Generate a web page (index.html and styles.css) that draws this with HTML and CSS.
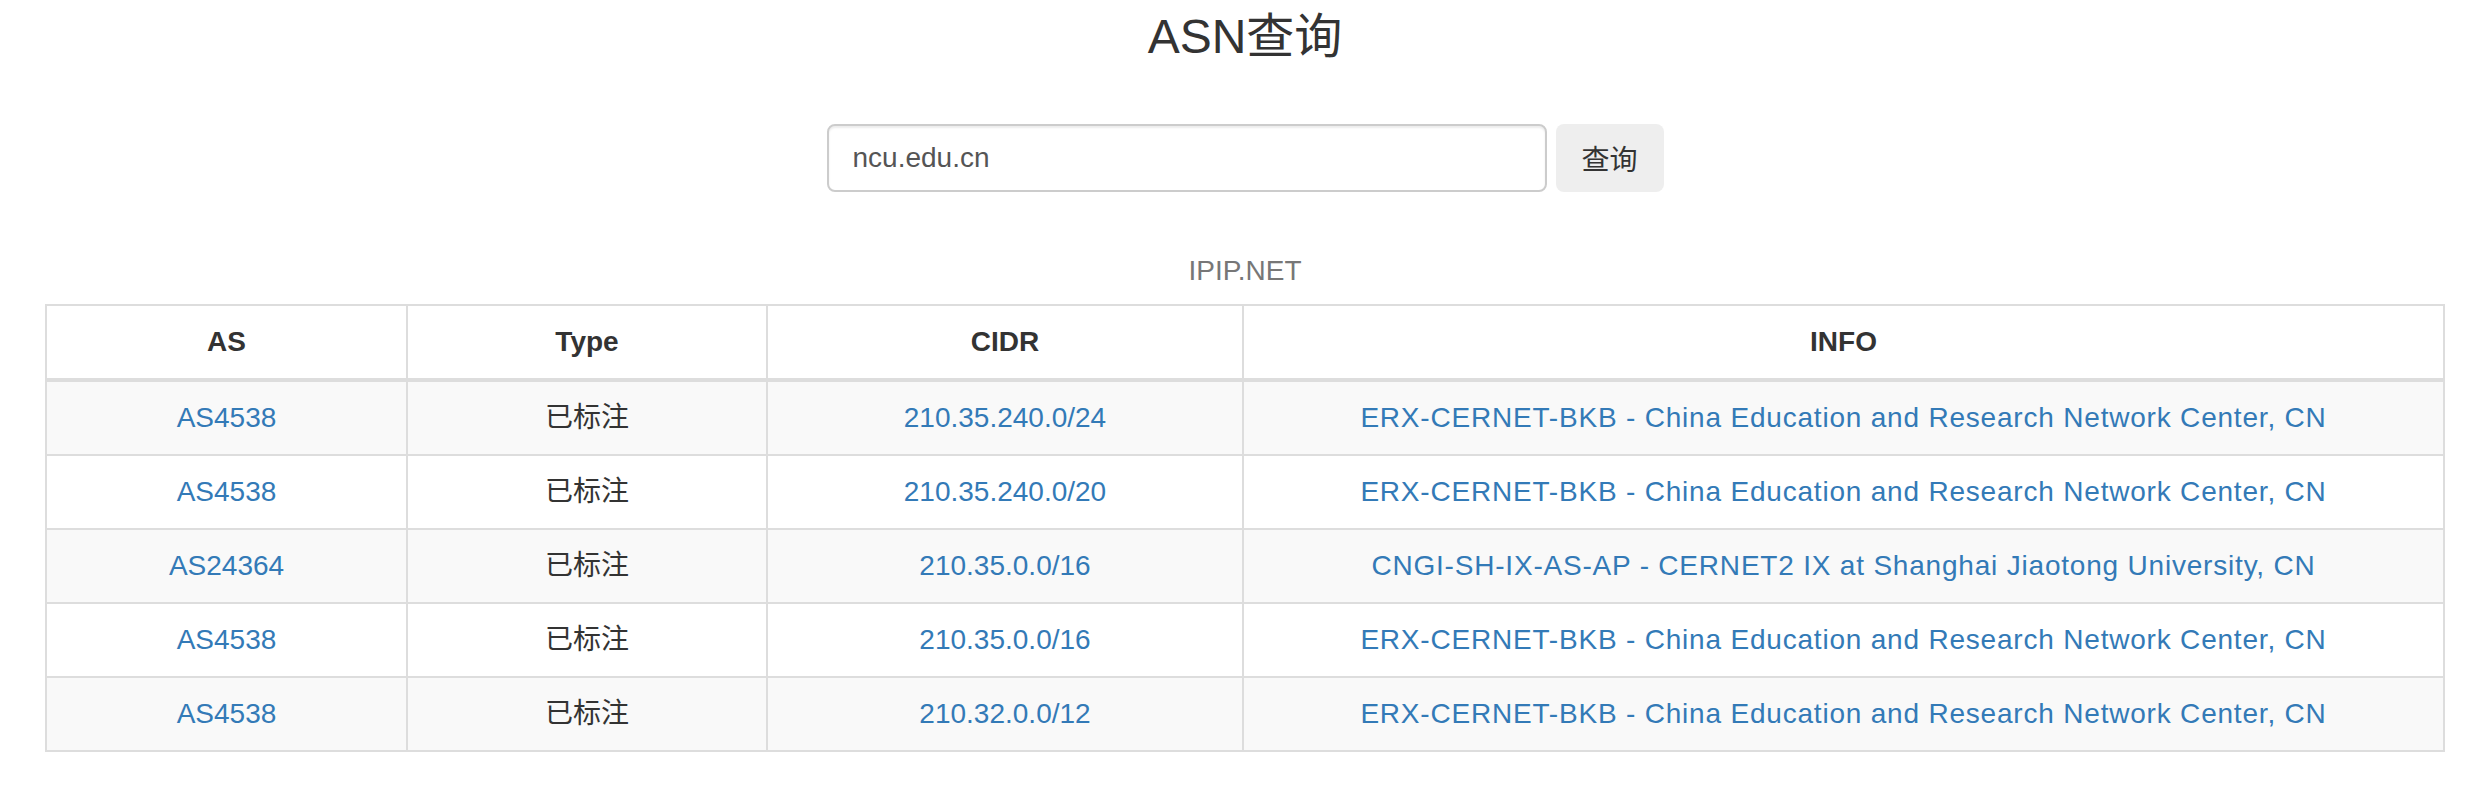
FILE: index.html
```html
<!DOCTYPE html>
<html lang="zh-CN">
<head>
<meta charset="utf-8">
<title>ASN查询</title>
<link rel="stylesheet" href="styles.css">
</head>
<body>
<div class="page">
  <h3 class="title">ASN查询</h3>
  <form class="search">
    <input class="search-input" type="text" value="ncu.edu.cn">
    <button class="search-btn" type="button">查询</button>
  </form>
  <table class="asn-table">
    <caption>IPIP.NET</caption>
    <colgroup>
      <col class="col-as">
      <col class="col-type">
      <col class="col-cidr">
      <col class="col-info">
    </colgroup>
    <thead>
      <tr><th>AS</th><th>Type</th><th>CIDR</th><th>INFO</th></tr>
    </thead>
    <tbody>
      <tr><td><a href="#">AS4538</a></td><td>已标注</td><td><a href="#">210.35.240.0/24</a></td><td class="info"><a href="#">ERX-CERNET-BKB - China Education and Research Network Center, CN</a></td></tr>
      <tr><td><a href="#">AS4538</a></td><td>已标注</td><td><a href="#">210.35.240.0/20</a></td><td class="info"><a href="#">ERX-CERNET-BKB - China Education and Research Network Center, CN</a></td></tr>
      <tr><td><a href="#">AS24364</a></td><td>已标注</td><td><a href="#">210.35.0.0/16</a></td><td class="info"><a href="#">CNGI-SH-IX-AS-AP - CERNET2 IX at Shanghai Jiaotong University, CN</a></td></tr>
      <tr><td><a href="#">AS4538</a></td><td>已标注</td><td><a href="#">210.35.0.0/16</a></td><td class="info"><a href="#">ERX-CERNET-BKB - China Education and Research Network Center, CN</a></td></tr>
      <tr><td><a href="#">AS4538</a></td><td>已标注</td><td><a href="#">210.32.0.0/12</a></td><td class="info"><a href="#">ERX-CERNET-BKB - China Education and Research Network Center, CN</a></td></tr>
    </tbody>
  </table>
</div>
</body>
</html>
```
FILE: styles.css
```css
html, body {
  margin: 0;
  padding: 0;
  background: #fff;
}
body {
  font-family: "Liberation Sans", "Noto Sans CJK SC", sans-serif;
  font-size: 28px;
  line-height: 40px;
  color: #333;
}
.page {
  width: 2400px;
  margin-left: 45px;
}
.title {
  margin: 10px 0 0;
  font-size: 48px;
  line-height: 53px;
  font-weight: normal;
  text-align: center;
  color: #333;
}
.search {
  display: flex;
  justify-content: center;
  gap: 9px;
  margin: 61px 0 0;
}
.search-input {
  box-sizing: border-box;
  width: 720px;
  height: 68px;
  padding: 12px 24px;
  border: 2px solid #ccc;
  border-radius: 8px;
  box-shadow: inset 0 2px 2px rgba(0, 0, 0, 0.075);
  font-family: inherit;
  font-size: 28px;
  line-height: 40px;
  color: #555;
  outline: none;
  margin: 0;
}
.search-btn {
  box-sizing: border-box;
  width: 108px;
  height: 68px;
  padding: 0;
  border: none;
  border-radius: 8px;
  background: #eee;
  font-family: inherit;
  font-size: 28px;
  color: #333;
  margin: 0;
}
.asn-table {
  width: 2400px;
  margin-top: 43px;
  border-collapse: collapse;
  border-spacing: 0;
  table-layout: fixed;
  border: 2px solid #ddd;
}
.asn-table caption {
  padding: 16px 0 13px;
  color: #777;
  text-align: center;
  line-height: 40px;
}
.col-as { width: 361px; }
.col-type { width: 360px; }
.col-cidr { width: 476px; }
.col-info { width: auto; }
.asn-table th,
.asn-table td {
  padding: 16px;
  border: 2px solid #ddd;
  text-align: center;
  vertical-align: middle;
  line-height: 40px;
  white-space: nowrap;
}
.asn-table th {
  font-weight: bold;
  border-bottom-width: 4px;
}
.asn-table td.info {
  letter-spacing: 0.8px;
}
.asn-table tbody tr:nth-of-type(odd) {
  background: #f9f9f9;
}
.asn-table a {
  color: #337ab7;
  text-decoration: none;
}
```
